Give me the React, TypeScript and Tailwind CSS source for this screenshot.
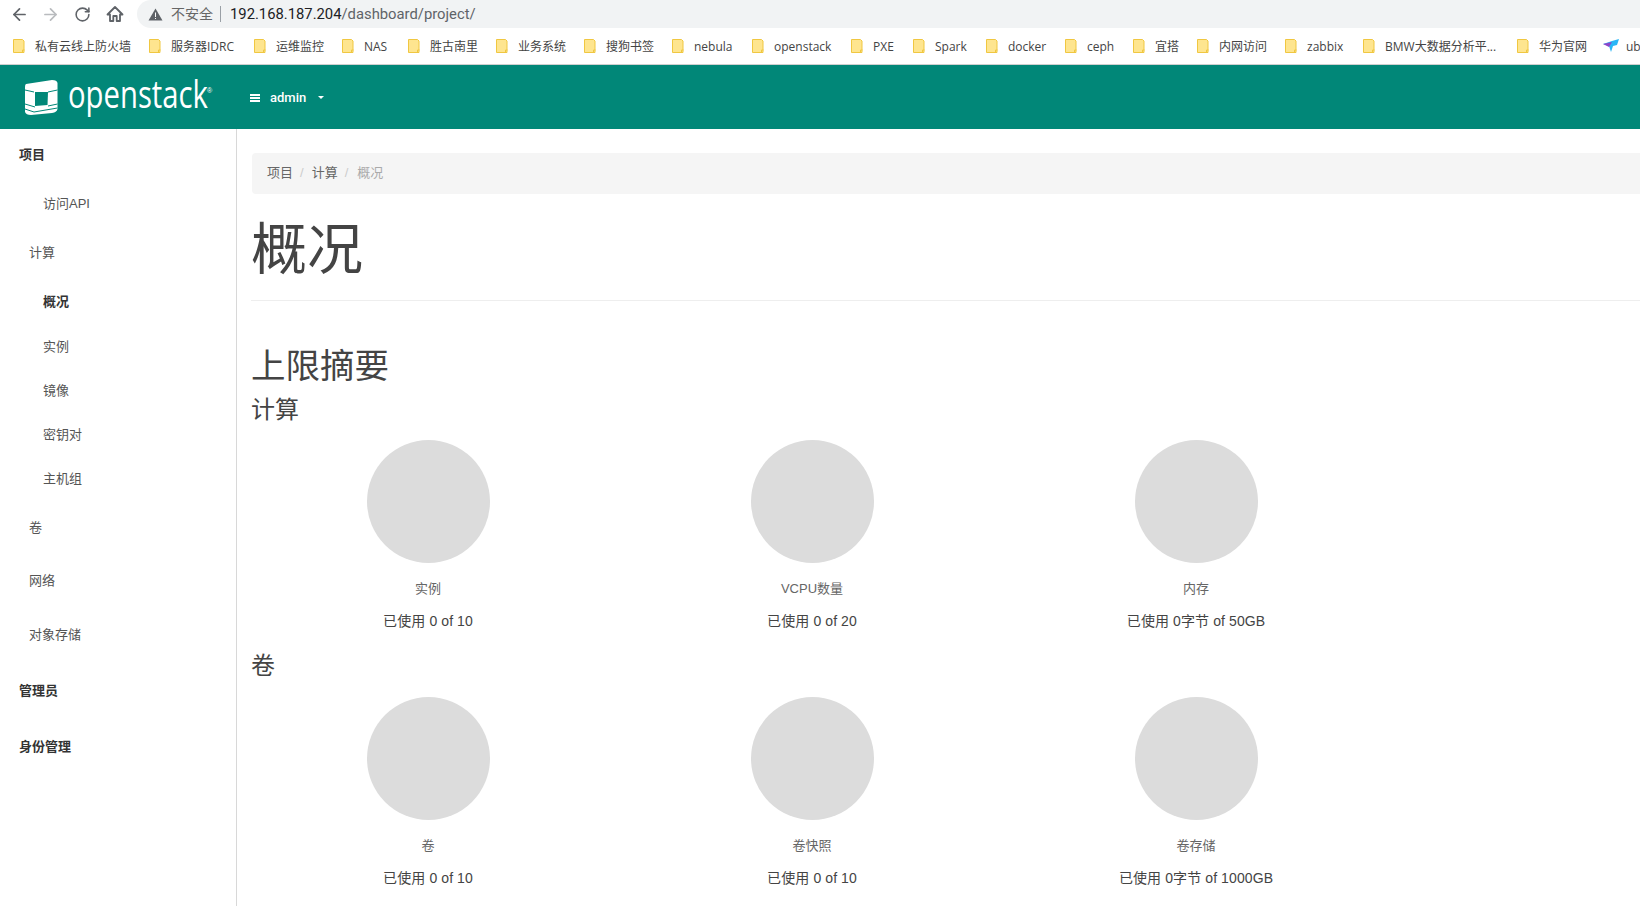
import React from 'react';
import { ArrowLeft, ArrowRight, RotateCw } from 'lucide-react';

const bookmarks = [
  { label: '私有云线上防火墙', w: 'w-[136px]' },
  { label: '服务器IDRC', w: 'w-[105px]' },
  { label: '运维监控', w: 'w-[88px]' },
  { label: 'NAS', w: 'w-[66px]' },
  { label: '胜古南里', w: 'w-[88px]' },
  { label: '业务系统', w: 'w-[88px]' },
  { label: '搜狗书签', w: 'w-[88px]' },
  { label: 'nebula', w: 'w-[80px]' },
  { label: 'openstack', w: 'w-[99px]' },
  { label: 'PXE', w: 'w-[62px]' },
  { label: 'Spark', w: 'w-[73px]' },
  { label: 'docker', w: 'w-[79px]' },
  { label: 'ceph', w: 'w-[68px]' },
  { label: '宜搭', w: 'w-[64px]' },
  { label: '内网访问', w: 'w-[88px]' },
  { label: 'zabbix', w: 'w-[78px]' },
  { label: 'BMW大数据分析平...', w: 'w-[154px]' },
  { label: '华为官网', w: 'w-[86px]' },
];

const sideItems = [
  { label: '项目', cls: 'h-[52px] pl-[19px] font-bold text-[#333]' },
  { label: '访问API', cls: 'h-[46px] pl-[43px] text-[#555]' },
  { label: '计算', cls: 'h-[52px] pl-[29px] text-[#555]' },
  { label: '概况', cls: 'h-[46px] pl-[43px] font-bold text-[#333]' },
  { label: '实例', cls: 'h-[44px] pl-[43px] text-[#555]' },
  { label: '镜像', cls: 'h-[44px] pl-[43px] text-[#555]' },
  { label: '密钥对', cls: 'h-[44px] pl-[43px] text-[#555]' },
  { label: '主机组', cls: 'h-[44px] pl-[43px] text-[#555]' },
  { label: '卷', cls: 'h-[53px] pl-[29px] text-[#555]' },
  { label: '网络', cls: 'h-[54px] pl-[29px] text-[#555]' },
  { label: '对象存储', cls: 'h-[54px] pl-[29px] text-[#555]' },
  { label: '管理员', cls: 'h-[58px] pl-[19px] font-bold text-[#333]' },
  { label: '身份管理', cls: 'h-[54px] pl-[19px] font-bold text-[#333]' },
];

const computeQuotas = [
  { name: '实例', used: '已使用 0 of 10' },
  { name: 'VCPU数量', used: '已使用 0 of 20' },
  { name: '内存', used: '已使用 0字节 of 50GB' },
];

const volumeQuotas = [
  { name: '卷', used: '已使用 0 of 10' },
  { name: '卷快照', used: '已使用 0 of 10' },
  { name: '卷存储', used: '已使用 0字节 of 1000GB' },
];

const FolderIcon = () => (
  <svg width="12" height="14" viewBox="0 0 12 14" className="shrink-0">
    <path d="M.5.5h9l1.500 1.500v11.500H.5z" fill="#fee58f" stroke="#f0c741" />
    <path d="M9.500 13.500V11h2" fill="none" stroke="#f0c741" />
  </svg>
);

const Logo = () => (
  <svg width="34" height="37" viewBox="0 0 34 37" className="shrink-0">
    <path d="M2 5 28 1Q33 1 33.500 4V30Q33 33 28 34L7 36Q2 36 1 33V8Q1 5.500 2 5z" fill="#fff" />
    <path d="M11 13H24L23.500 26 11 27z" fill="#018778" />
    <path
      d="M1 11 10 13M33.500 11 24 13M1 25 11 28M33.500 25 24 27M1 30 10 33 33.500 29"
      fill="none"
      stroke="#018778"
      strokeWidth="1"
    />
  </svg>
);

const Chrome = () => (
  <div>
    <div className="flex h-[28px] items-center bg-white">
      <div className="flex w-[137px] shrink-0 items-center text-[#5f6368]">
        <ArrowLeft size={19} strokeWidth={2.2} className="ml-[10px]" />
        <ArrowRight size={19} strokeWidth={2.2} className="ml-[12px] text-[#b9bbbe]" />
        <RotateCw size={17} strokeWidth={2.2} className="ml-[14px]" />
        <svg width="18" height="18" viewBox="0 0 18 18" className="ml-[15px]">
          <path
            d="M9 2 1.500 9.500H4V16H7.300V11H10.700V16H14V9.500H16.500z"
            fill="none"
            stroke="currentColor"
            strokeWidth="1.800"
            strokeLinejoin="round"
          />
        </svg>
      </div>
      <div className="flex h-[28px] flex-1 items-center rounded-l-[14px] bg-[#f1f3f4]">
        <svg width="15" height="13" viewBox="0 0 15 13" className="ml-[11px] shrink-0">
          <path d="M7.500.5 14.500 12.500H.5z" fill="#5f6368" />
          <path d="M7 4.500h1V9H7zM7 10h1v1H7z" fill="#fff" />
        </svg>
        <span className="ml-[8px] text-[14px] text-[#666]">不安全</span>
        <span className="ml-[7px] h-[16px] w-px bg-[#9aa0a6]" />
        <span className="ml-[9px] font-['Roboto',sans-serif] text-[14.800px] text-[#5f6368]">
          <span className="text-[#202124]">192.168.187.204</span>/dashboard/project/
        </span>
      </div>
    </div>
    <div className="flex h-[37px] items-center overflow-hidden border-b border-[#cfcfcf] bg-white pl-[13px] font-['Open_Sans','Noto_Sans_CJK_SC',sans-serif]">
      {bookmarks.map((b) => (
        <div key={b.label} className={`flex shrink-0 items-center gap-[10px] ${b.w}`}>
          <FolderIcon />
          <span className="whitespace-nowrap pt-[2px] text-[12px] text-[#444]">{b.label}</span>
        </div>
      ))}
      <div className="flex shrink-0 items-center gap-[7px]">
        <svg width="16" height="14" viewBox="0 0 16 14" className="shrink-0">
          <path d="M0 5 9 2 16 0 14 6 10 7 8 13 6 7z" fill="#29b6f6" />
          <path d="M0 5 9 3 6 8z" fill="#8e44c9" />
        </svg>
        <span className="pt-[2px] text-[12px] text-[#444]">ub</span>
      </div>
    </div>
  </div>
);

const QuotaRow = ({ items }: { items: { name: string; used: string }[] }) => (
  <div className="ml-[-16px] grid w-[1152px] grid-cols-3">
    {items.map((q) => (
      <div key={q.name} className="flex flex-col items-center">
        <div className="h-[123px] w-[123px] rounded-full bg-[#dcdcdc]" />
        <div className="mt-[16px] h-[20px] text-[13px] leading-[20px] text-[#666]">{q.name}</div>
        <div className="mt-[12px] h-[20px] text-[14px] leading-[20px] tracking-[0.1px] text-[#444]">
          {q.used}
        </div>
      </div>
    ))}
  </div>
);

export default function App() {
  return (
    <div className="h-[906px] w-[1640px] overflow-hidden bg-white font-['Liberation_Sans','Noto_Sans_CJK_SC',sans-serif]">
      <Chrome />
      <header className="flex h-[64px] items-center bg-[#018778] text-white">
        <div className="ml-[24px] flex w-[226px] items-center">
          <Logo />
          <span className="mb-[8px] ml-[10px] w-[138px] origin-left scale-x-[0.77] font-['Open_Sans',sans-serif] text-[38px] leading-none whitespace-nowrap">
            openstack
          </span>
          <span className="mb-[14px] ml-[1px] text-[7px] leading-none">®</span>
        </div>
        <div className="flex items-center pt-[1px] text-[13px]">
          <svg width="10" height="8" viewBox="0 0 10 8" className="mr-[10px]">
            <path d="M0 0h10v2H0zM0 3h10v2H0zM0 6h10v2H0z" fill="#fff" />
          </svg>
          <span className="font-['Roboto',sans-serif] font-medium">admin</span>
          <span className="ml-[12px] h-0 w-0 border-x-[3px] border-t-[3px] border-x-transparent border-t-white" />
        </div>
      </header>
      <div className="flex h-[777px]">
        <aside className="w-[237px] shrink-0 border-r border-[#d8d8d8] text-[13px]">
          {sideItems.map((s) => (
            <div key={s.label} className={`flex items-center ${s.cls}`}>
              {s.label}
            </div>
          ))}
        </aside>
        <main className="flex-1 overflow-hidden pl-[15px] text-[#444]">
          <div className="mt-[24px] flex h-[41px] items-center gap-[7px] rounded-l-[4px] bg-[#f5f5f5] pb-[2px] pl-[15px] text-[13px]">
            <span className="text-[#666]">项目</span>
            <span className="text-[#ccc]">/</span>
            <span className="ml-[1px] text-[#666]">计算</span>
            <span className="text-[#ccc]">/</span>
            <span className="ml-[2px] text-[#aaa]">概况</span>
          </div>
          <h1 className="mt-[22px] ml-[-1px] h-[85px] border-b border-[#eee] text-[56px] leading-[68px] font-normal">
            概况
          </h1>
          <h2 className="mt-[43px] ml-[-1px] h-[48px] text-[34.500px] leading-[44px] font-normal">上限摘要</h2>
          <h3 className="ml-[-1px] h-[36px] text-[24px] leading-[36px] font-normal">计算</h3>
          <div className="mt-[12px]">
            <QuotaRow items={computeQuotas} />
          </div>
          <h3 className="mt-[17px] ml-[-1px] h-[36px] text-[24px] leading-[36px] font-normal">卷</h3>
          <div className="mt-[13px]">
            <QuotaRow items={volumeQuotas} />
          </div>
        </main>
      </div>
    </div>
  );
}
